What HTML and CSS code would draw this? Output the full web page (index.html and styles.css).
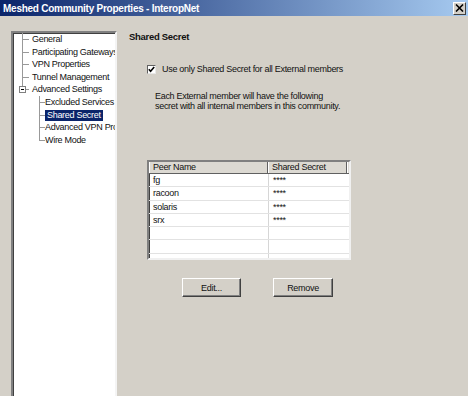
FILE: index.html
```html
<!DOCTYPE html>
<html>
<head>
    <title>Meshed Community Properties - InteropNet</title>
    <link rel="stylesheet" href="styles.css">
</head>
<body>
    <div class="titlebar">
        <span class="title">Meshed Community Properties - InteropNet</span>
        <span class="close">
            <svg width="9" height="8" viewBox="0 0 9 8"><path d="M1 0.5 L8 7.5 M8 0.5 L1 7.5" stroke="#000" stroke-width="1.6"/></svg>
        </span>
    </div>

    <div class="main">
        <div class="tree">
            <ul class="level1">
                <li>General</li>
                <li>Participating Gateways</li>
                <li>VPN Properties</li>
                <li>Tunnel Management</li>
                <li class="open"><span class="toggle"></span>Advanced Settings</li>
            </ul>
            <ul class="level2">
                <li>Excluded Services</li>
                <li><span class="selected">Shared Secret</span></li>
                <li>Advanced VPN Properties</li>
                <li>Wire Mode</li>
            </ul>
        </div>

        <div class="panel">
            <div class="heading">Shared Secret</div>

            <label class="option">
                <span class="checkbox">
                    <svg width="7" height="7" viewBox="0 0 7 7"><polyline points="0.8,3.2 2.6,5.2 6.2,1" fill="none" stroke="#000" stroke-width="1.6"/></svg>
                </span>
                Use only Shared Secret for all External members
            </label>

            <p class="note">
                Each External member will have the following<br>
                secret with all internal members in this community.
            </p>

            <div class="list">
                <div class="list-head">
                    <div class="col-name">Peer Name</div>
                    <div class="col-secret">Shared Secret</div>
                    <div class="col-rest"></div>
                </div>
                <div class="list-body">
                    <div class="row"><div class="col-name">fg</div><div class="col-secret">****</div></div>
                    <div class="row"><div class="col-name">racoon</div><div class="col-secret">****</div></div>
                    <div class="row"><div class="col-name">solaris</div><div class="col-secret">****</div></div>
                    <div class="row"><div class="col-name">srx</div><div class="col-secret">****</div></div>
                    <div class="row"><div class="col-name"></div><div class="col-secret"></div></div>
                    <div class="row"><div class="col-name"></div><div class="col-secret"></div></div>
                    <div class="row"><div class="col-name"></div><div class="col-secret"></div></div>
                </div>
            </div>

            <div class="buttons">
                <button class="btn btn-edit">Edit...</button>
                <button class="btn btn-remove">Remove</button>
            </div>
        </div>
    </div>
</body>
</html>
```

FILE: styles.css
```css
* {
    box-sizing: border-box;
}

body {
    margin: 0;
    height: 396px;
    overflow: hidden;
    background-color: #d4d0c8;
    font-family: "Liberation Sans", Arial, sans-serif;
    font-size: 9px;
    letter-spacing: -0.3px;
    color: #111;
}

.titlebar {
    height: 16px;
    display: flex;
    align-items: center;
    justify-content: space-between;
    padding: 0 2px 0 3px;
    background: linear-gradient(to right, #0a246a, #a6caf0);
}

.title {
    color: #fff;
    font-weight: bold;
    font-size: 10px;
    letter-spacing: -0.25px;
}

.close {
    width: 13px;
    height: 13px;
    display: flex;
    align-items: center;
    justify-content: center;
    background-color: #d4d0c8;
    border: 1px solid;
    border-color: #fff #404040 #404040 #fff;
}

.main {
    display: flex;
    padding-top: 15px;
}

/* tree on the left */
.tree {
    margin-left: 11px;
    width: 106px;
    height: 380px;
    overflow: hidden;
    background-color: #fff;
    border: 2px solid;
    border-color: #808080 #f4f4f4 #f4f4f4 #808080;
    box-shadow: inset 1px 1px #404040;
    white-space: nowrap;
}

.tree ul {
    list-style: none;
    margin: 0;
    padding: 0;
    position: relative;
}

.tree li {
    position: relative;
    height: 12.6px;
    line-height: 12.6px;
}

.level1 li {
    padding-left: 19px;
}

.level1::before {
    content: "";
    position: absolute;
    left: 9px;
    top: 0;
    height: 56.7px;
    border-left: 1px solid #999;
}

.level1 li::before,
.level2 li::before {
    content: "";
    position: absolute;
    top: 6px;
    width: 7px;
    border-top: 1px solid #999;
}

.level1 li::before {
    left: 9px;
}

.level2 li {
    padding-left: 32px;
}

.level2 li::before {
    left: 26px;
    width: 6px;
}

.level2::before {
    content: "";
    position: absolute;
    left: 26px;
    top: 0;
    height: 44px;
    border-left: 1px solid #999;
}

.toggle {
    position: absolute;
    left: 6px;
    top: 3px;
    width: 7px;
    height: 7px;
    z-index: 1;
    background-color: #fff;
    border: 1px solid #808080;
}

.toggle::after {
    content: "";
    position: absolute;
    left: 1px;
    top: 2px;
    width: 3px;
    border-top: 1px solid #000;
}

.selected {
    display: inline-block;
    line-height: 11px;
    padding: 0 2px;
    background-color: #0a246a;
    color: #fff;
}

/* right panel */
.panel {
    padding-left: 12px;
    display: flex;
    flex-direction: column;
    align-items: flex-start;
}

.heading {
    font-weight: bold;
    font-size: 9.5px;
    line-height: 11px;
}

.option {
    display: flex;
    align-items: center;
    margin: 21px 0 0 18px;
    line-height: 12px;
}

.checkbox {
    width: 9px;
    height: 9px;
    margin-right: 6px;
    display: flex;
    align-items: center;
    justify-content: center;
    background-color: #fff;
    border: 1px solid;
    border-color: #606060 #e8e8e8 #e8e8e8 #606060;
}

.note {
    margin: 16px 0 0 26px;
    line-height: 10px;
}

/* list view */
.list {
    margin: 49px 0 0 18px;
    width: 204px;
    height: 100px;
    overflow: hidden;
    background-color: #fff;
    border: 2px solid;
    border-color: #808080 #f0f0f0 #f0f0f0 #808080;
    box-shadow: inset 1px 1px #404040;
}

.list-head {
    display: flex;
    height: 12px;
    line-height: 11px;
    background-color: #dcd9d2;
    border-bottom: 1px solid #606060;
}

.list-head div {
    border-right: 1px solid #606060;
    box-shadow: inset 1px 0 #fff;
}

.col-name {
    width: 119px;
    padding-left: 4px;
}

.col-secret {
    width: 79px;
    padding-left: 4px;
}

.list-head .col-rest {
    flex: 1;
    border-right: none;
}

.row {
    display: flex;
    height: 13.3px;
    line-height: 12px;
    border-bottom: 1px solid #e2e2e2;
}

.row .col-secret {
    border-left: 1px solid #d6d6d6;
}

.buttons {
    display: flex;
    gap: 32px;
    margin: 18px 0 0 53px;
}

.btn {
    height: 19px;
    padding: 0;
    font: inherit;
    letter-spacing: inherit;
    color: #111;
    background-color: #d4d0c8;
    border: 1px solid;
    border-color: #fff #404040 #404040 #fff;
    box-shadow: inset -1px -1px #808080;
}

.btn-edit {
    width: 59px;
}

.btn-remove {
    width: 60px;
}
```
